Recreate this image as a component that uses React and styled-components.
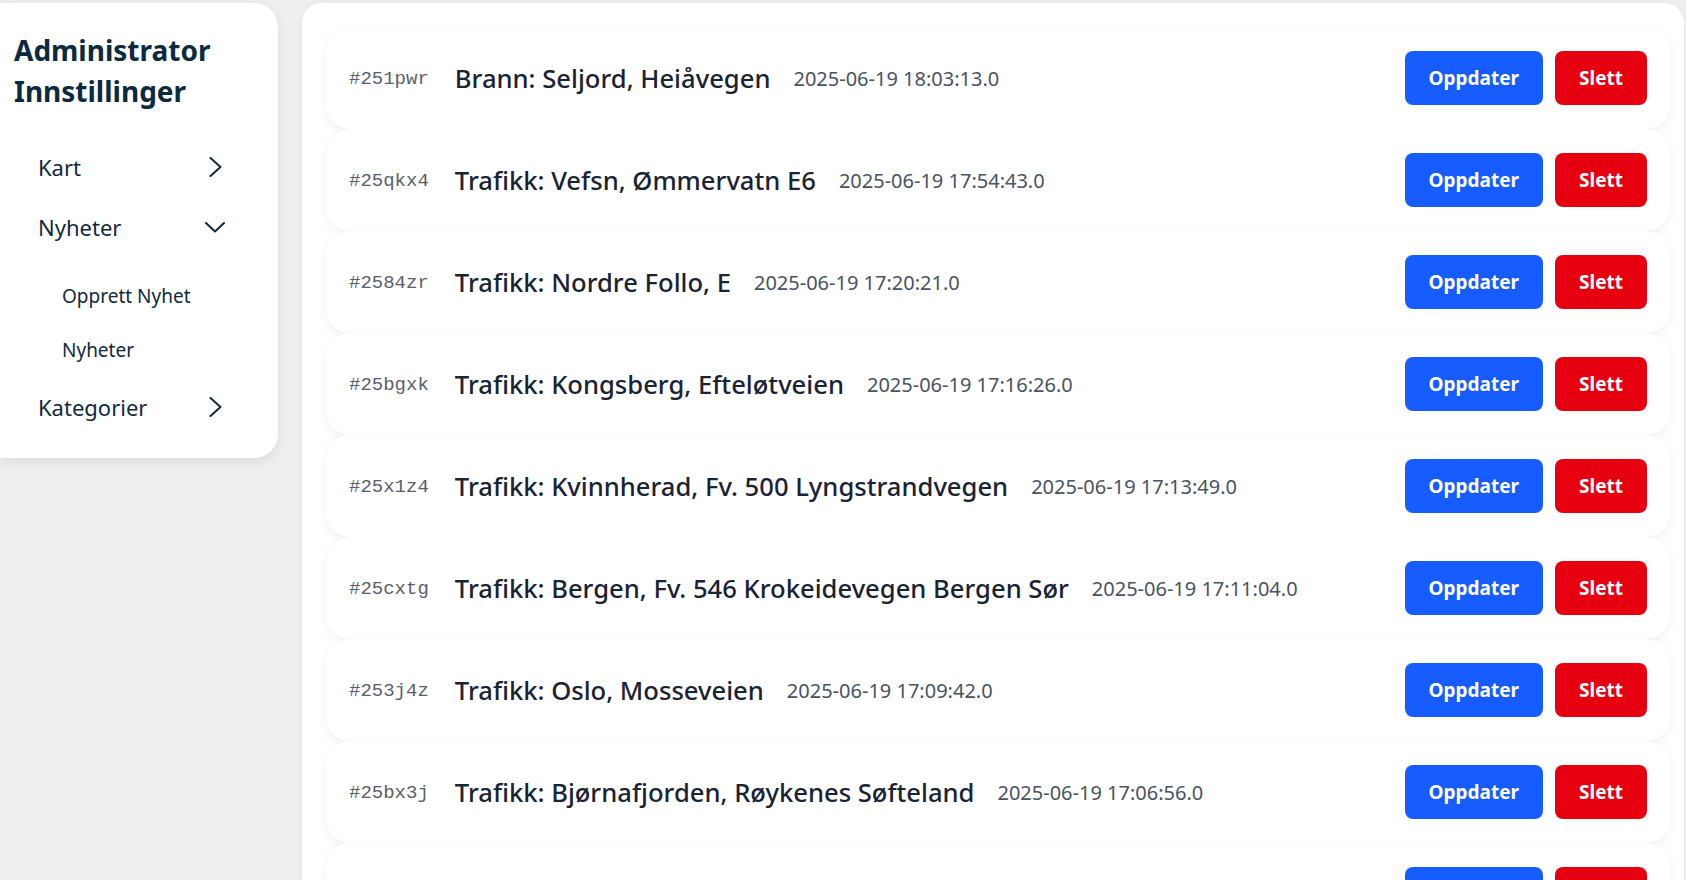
import styled, { createGlobalStyle } from "styled-components";

const GlobalStyle = createGlobalStyle`
  body {
    margin: 0;
    background: #efefef;
    font-family: "Noto Sans", "Open Sans", sans-serif;
    color: #0f2233;
  }
`;

const articles = [
  { id: "#251pwr", title: "Brann: Seljord, Heiåvegen", date: "2025-06-19 18:03:13.0" },
  { id: "#25qkx4", title: "Trafikk: Vefsn, Ømmervatn E6", date: "2025-06-19 17:54:43.0" },
  { id: "#2584zr", title: "Trafikk: Nordre Follo, E", date: "2025-06-19 17:20:21.0" },
  { id: "#25bgxk", title: "Trafikk: Kongsberg, Efteløtveien", date: "2025-06-19 17:16:26.0" },
  { id: "#25x1z4", title: "Trafikk: Kvinnherad, Fv. 500 Lyngstrandvegen", date: "2025-06-19 17:13:49.0" },
  { id: "#25cxtg", title: "Trafikk: Bergen, Fv. 546 Krokeidevegen Bergen Sør", date: "2025-06-19 17:11:04.0" },
  { id: "#253j4z", title: "Trafikk: Oslo, Mosseveien", date: "2025-06-19 17:09:42.0" },
  { id: "#25bx3j", title: "Trafikk: Bjørnafjorden, Røykenes Søfteland", date: "2025-06-19 17:06:56.0" },
  { id: "#25m8q2", title: "Trafikk: Trondheim, Omkjøringsvegen", date: "2025-06-19 17:02:11.0" },
];

const ChevronRight = () => (
  <svg width="13" height="20" viewBox="0 0 13 20" fill="none">
    <polyline points="1.5,1 11.5,10 1.5,19" stroke="currentColor" strokeWidth="2" strokeLinecap="round" strokeLinejoin="round" />
  </svg>
);

const ChevronDown = () => (
  <svg width="20" height="11" viewBox="0 0 20 11" fill="none">
    <polyline points="1,1 10,9.5 19,1" stroke="currentColor" strokeWidth="2" strokeLinecap="round" strokeLinejoin="round" />
  </svg>
);

export default function App() {
  return (
    <>
      <GlobalStyle />
      <Page>
        <Sidebar>
          <Title>Administrator Innstillinger</Title>
          <NavItem>
            Kart
            <Icon><ChevronRight /></Icon>
          </NavItem>
          <NavItem>
            Nyheter
            <Icon><ChevronDown /></Icon>
          </NavItem>
          <SubList>
            <SubItem>Opprett Nyhet</SubItem>
            <SubItem>Nyheter</SubItem>
          </SubList>
          <NavItem>
            Kategorier
            <Icon><ChevronRight /></Icon>
          </NavItem>
        </Sidebar>

        <Main>
          {articles.map((a) => (
            <Row key={a.id}>
              <Info>
                <Id>{a.id}</Id>
                <RowTitle>{a.title}</RowTitle>
                <Date>{a.date}</Date>
              </Info>
              <Actions>
                <Button>Oppdater</Button>
                <Button $danger>Slett</Button>
              </Actions>
            </Row>
          ))}
        </Main>
      </Page>
    </>
  );
}

const Page = styled.div`
  display: flex;
  align-items: flex-start;
  gap: 24px;
  padding: 3px 2px 0 0;
`;

const Sidebar = styled.aside`
  width: 278px;
  flex-shrink: 0;
  box-sizing: border-box;
  background: #fff;
  border-radius: 0 24px 24px 0;
  box-shadow: 0 4px 14px rgba(0, 0, 0, 0.08);
  padding: 27px 0 21px 0;
`;

const Title = styled.h1`
  margin: 0 0 25px 0;
  padding-left: 14px;
  font-size: 28px;
  line-height: 41px;
  font-weight: 700;
  color: #0b2a40;
`;

const NavItem = styled.div`
  display: flex;
  align-items: center;
  justify-content: space-between;
  height: 60px;
  padding: 0 53px 0 38px;
  font-size: 22px;
  color: #0f2a3d;
  cursor: pointer;
`;

const Icon = styled.span`
  width: 20px;
  display: flex;
  justify-content: center;
  color: #0f2a3d;
`;

const SubList = styled.div`
  margin-top: 12px;
`;

const SubItem = styled.div`
  height: 54px;
  line-height: 54px;
  padding-left: 62px;
  font-size: 19px;
  color: #0f2a3d;
  cursor: pointer;
`;

const Main = styled.main`
  flex: 1;
  min-height: 900px;
  background: #fff;
  border-radius: 20px 20px 0 0;
  box-shadow: 0 2px 10px rgba(0, 0, 0, 0.05);
  padding: 24px 14px 0 24px;
`;

const Row = styled.div`
  display: flex;
  align-items: center;
  padding: 24px 23px;
  background: #fff;
  border-radius: 24px;
  box-shadow: 0 4px 12px rgba(0, 0, 0, 0.06);
`;

const Info = styled.div`
  display: flex;
  align-items: center;
  gap: 23px;
`;

const Id = styled.span`
  padding-top: 2px;
  margin-right: 3px;
  font-family: "Liberation Mono", "DejaVu Sans Mono", monospace;
  font-size: 19px;
  color: #5a6069;
`;

const RowTitle = styled.span`
  font-size: 25.6px;
  font-weight: 500;
  color: #1a2333;
`;

const Date = styled.span`
  font-size: 20px;
  color: #4a5361;
`;

const Actions = styled.div`
  margin-left: auto;
  display: flex;
  gap: 12px;
`;

const Button = styled.button`
  height: 54px;
  padding: 0 24px;
  border: none;
  border-radius: 8px;
  background: ${(p) => (p.$danger ? "#e6000f" : "#175cff")};
  color: #fff;
  font-family: "Noto Sans", sans-serif;
  font-size: 19px;
  font-weight: 700;
  cursor: pointer;
`;
